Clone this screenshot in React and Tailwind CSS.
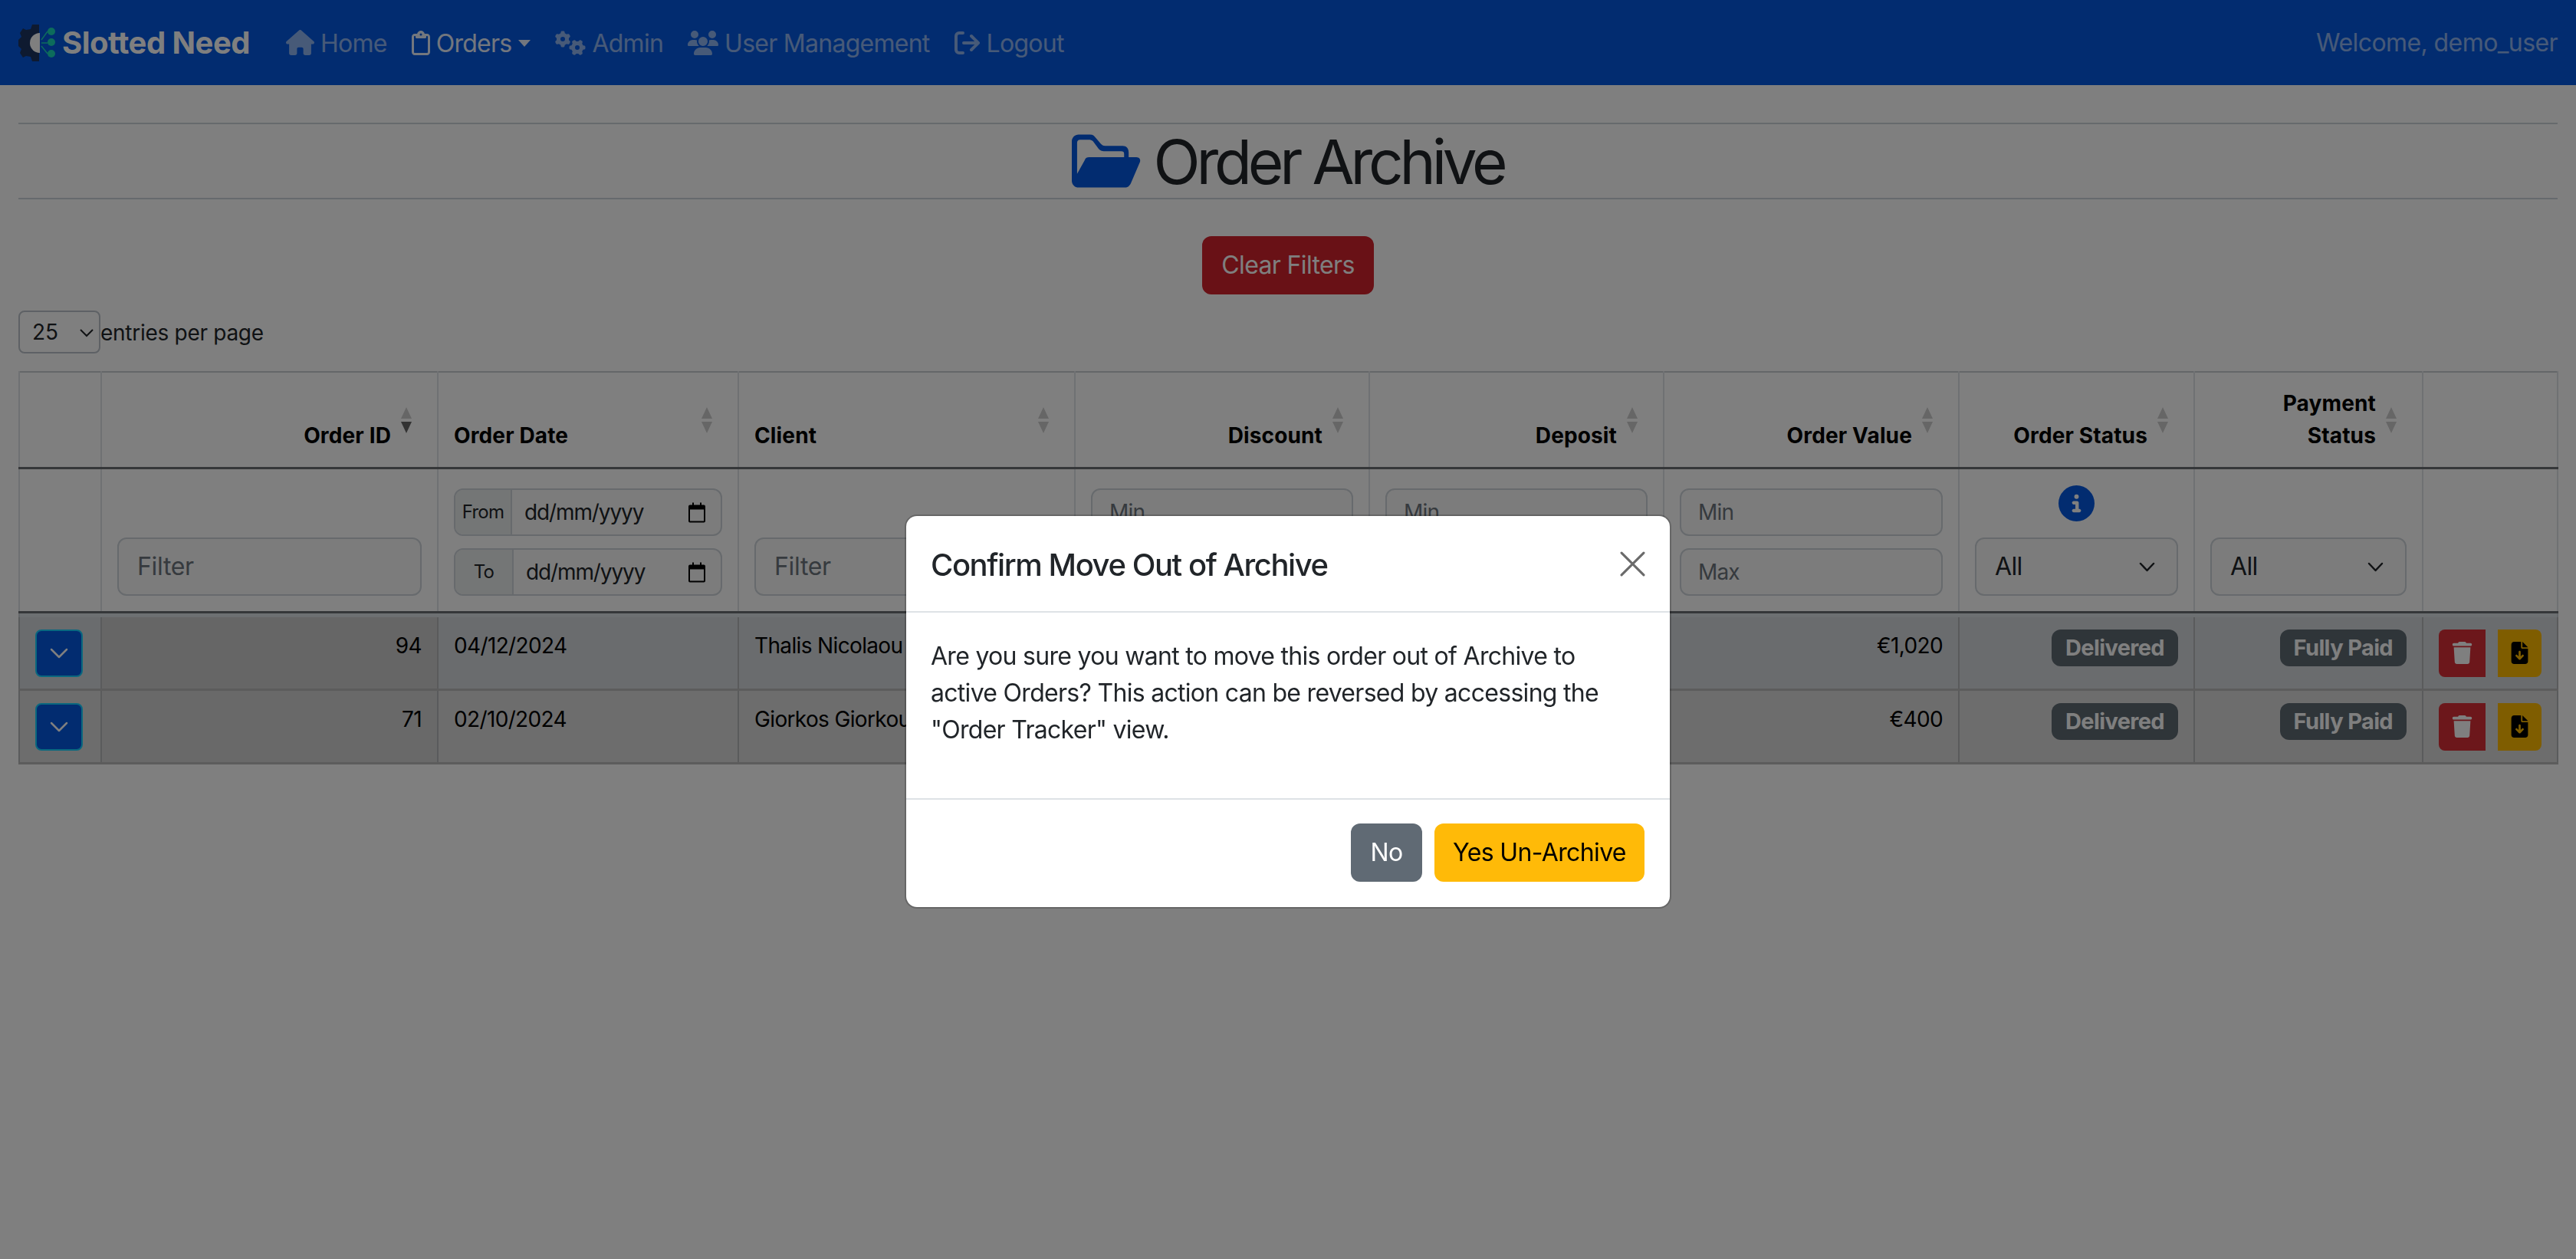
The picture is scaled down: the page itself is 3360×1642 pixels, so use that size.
import React from "react";
import { FaHouse, FaRegClipboard, FaGears, FaUsers, FaCircleInfo, FaTrash, FaFileArrowDown } from "react-icons/fa6";

const NavItem = ({ icon, label, active, gap = "gap-[8px]" }) => (
  <a className={`flex items-center ${gap} text-[32px] leading-[48px] tracking-[-0.023em] ${active ? "text-white/90" : "text-white/55"}`}>
    {icon}
    <span className="pt-[3px]">{label}</span>
    {active && <span className="ml-[1px] mt-[2px] border-x-[8px] border-t-[9px] border-x-transparent border-t-white/90" />}
  </a>
);

const Sort = ({ active }) => (
  <svg className="absolute right-[32px] top-[45px] w-[16px] h-[34px]" viewBox="0 0 16 34">
    <path d="M8 0 L15 15 L1 15 Z" fill="#000" fillOpacity="0.2" />
    <path d="M8 34 L15 19 L1 19 Z" fill="#000" fillOpacity={active ? 0.6 : 0.2} />
  </svg>
);

const Th = ({ children, right, active }) => (
  <th className={`relative align-bottom border-x-2 border-[#dee2e6] pl-[20px] pr-[60px] pt-[19px] pb-[20px] text-[28px] leading-[42px] tracking-[0.005em] font-bold text-black ${right ? "text-right" : "text-left"}`}>
    {children}
    <Sort active={active} />
  </th>
);

const inputCls = "block w-full border-2 border-[#ced4da] rounded-[12px] bg-[#f8f8f8] text-[#6c757d] px-[22px] text-[28px] tracking-[-0.03em]";

const Filter = () => (
  <div className={`${inputCls} h-[76px] leading-[72px] !text-[32px] !tracking-[-0.01em] pl-[24px]`}>Filter</div>
);

const MinMax = () => (
  <div className="flex flex-col gap-[16px]">
    <div className={`${inputCls} h-[62px] leading-[58px]`}>Min</div>
    <div className={`${inputCls} h-[62px] leading-[58px]`}>Max</div>
  </div>
);

const DateIcon = () => (
  <svg width="22" height="27" viewBox="0 0 22 26" className="ml-auto mr-[20px]">
    <path d="M5 0h2v3h8V0h2v3h3a2 2 0 0 1 2 2v19a2 2 0 0 1-2 2H2a2 2 0 0 1-2-2V5a2 2 0 0 1 2-2h3z M2 9v15h18V9z" fill="#000" fillRule="evenodd" />
  </svg>
);

const DateField = ({ label, w, h }) => (
  <div className={`flex ${h} border-2 border-[#ced4da] rounded-[12px] bg-[#f8f8f8] overflow-hidden items-stretch`}>
    <span className={`${w} flex items-center justify-center bg-[#e9ecec] border-r-2 border-[#ced4da] text-[24px] tracking-[-0.03em] text-[#212529]`}>{label}</span>
    <span className="flex-1 flex items-center pl-[16px] text-[28px] tracking-[-0.04em] text-[#212529]">dd/mm/yyyy<DateIcon /></span>
  </div>
);

const Select = () => (
  <div className="relative flex items-center h-[76px] border-2 border-[#ced4da] rounded-[12px] bg-[#f8f8f8] pl-[24px] text-[32px] tracking-[-0.02em] text-[#212529]">
    All
    <svg className="absolute right-[28px] top-[30px] w-[21px] h-[13px]" viewBox="0 0 21 13" fill="none" stroke="#212529" strokeWidth="2.5" strokeLinecap="round" strokeLinejoin="round">
      <path d="M2 2 L10.5 11 L19 2" />
    </svg>
  </div>
);

const Badge = ({ children }) => (
  <span className="inline-block bg-[#5e6a72] text-white rounded-[12px] px-[18px] h-[48px] leading-[48px] text-[29px] font-bold">{children}</span>
);

const Td = ({ children, right, className = "" }) => (
  <td className={`align-top border-x-2 border-[#b4b6b8] px-[20px] pt-[16px] pb-[15px] text-[28px] leading-[42px] tracking-[-0.023em] text-black ${right ? "text-right" : "text-left"} ${className}`}>{children}</td>
);

const Row = ({ id, date, client, value, bg, sortedBg }) => (
  <tr className={`${bg} border-b-[3px] border-[#b8b8b8]`}>
    <Td>
      <button className="flex items-center justify-center w-[62px] h-[62px] rounded-[8px] bg-[#0458e0] border-2 border-[#14d0ff] text-white">
        <svg width="24" height="14" viewBox="0 0 24 14" fill="none" stroke="white" strokeWidth="2.5" strokeLinecap="round" strokeLinejoin="round"><path d="M2 2 L12 12 L22 2" /></svg>
      </button>
    </Td>
    <Td right className={sortedBg}>{id}</Td>
    <Td>{date}</Td>
    <Td>{client}</Td>
    <Td right />
    <Td right />
    <Td right>{value}</Td>
    <Td right><Badge>Delivered</Badge></Td>
    <Td right><Badge>Fully Paid</Badge></Td>
    <Td className="!pl-[20px] !pr-0">
      <div className="flex gap-[16px]">
        <button className="flex items-center justify-center w-[61px] h-[62px] rounded-l-[8px] bg-[#d82e36] text-white"><FaTrash size={29} /></button>
        <button className="flex items-center justify-center w-[57px] h-[62px] rounded-r-[8px] bg-[#ffba00] text-black"><FaFileArrowDown size={29} /></button>
      </div>
    </Td>
  </tr>
);

export default function App() {
  return (
    <div className="relative min-h-[1642px] bg-white overflow-hidden text-[#212529]" style={{ fontFamily: "Inter, 'Liberation Sans', sans-serif" }}>
      <nav className="flex items-center h-[111px] bg-[#0458e0] px-[24px]">
        <svg width="52" height="48" viewBox="0 0 52 48" className="mr-[5px]">
          <path d="M18 0h9v48h-9l-2-6-6-1-4 2-4-6 2-5-4-4v-8l4-4-2-5 4-6 4 2 6-1z" fill="#1c3460" />
          <path d="M28 11a13 13 0 0 0 0 26z" fill="#ffffff" />
          <circle cx="43" cy="9" r="5" fill="#1ad8b8" /><circle cx="43" cy="23" r="5" fill="#1ad8b8" /><circle cx="43" cy="38" r="5" fill="#1ad8b8" />
          <path d="M30 20L38 9M30 24h8M30 28l8 10" stroke="#1ad8b8" strokeWidth="1.5" />
        </svg>
        <span className="text-[40px] leading-[60px] font-bold text-white tracking-[-0.0125em] mr-[47px]">Slotted Need</span>
        <div className="flex items-center gap-[32px]">
          <NavItem icon={<FaHouse size={37} />} label="Home" />
          <NavItem icon={<FaRegClipboard size={32} className="-mx-[4px]" />} label="Orders" active />
          <NavItem icon={<FaGears size={40} />} label="Admin" />
          <NavItem icon={<FaUsers size={40} />} label="User Management" />
          <NavItem
            icon={
              <svg width="34" height="30" viewBox="0 0 34 30" fill="none" stroke="currentColor" strokeWidth="4" strokeLinecap="round" strokeLinejoin="round">
                <path d="M11 2H6a4 4 0 0 0-4 4v18a4 4 0 0 0 4 4h5" />
                <path d="M12 15H31M22 6l9 9-9 9" />
              </svg>
            }
            label="Logout"
          />
        </div>
        <span className="ml-auto text-[32px] tracking-[-0.018em] text-white/55">Welcome, demo_user</span>
      </nav>

      <main className="px-[24px]">
        <div className="mt-[49px] border-y-2 border-[#cdd4da] h-[100px] flex items-center justify-center">
          <svg width="90" height="70" viewBox="0 0 91 70" className="mr-[16px] text-[#0458e0]">
            <path fill="currentColor" d="M9 0H24C28 0 30 2 32 5L38 12C40 14 41 15 44 15H67C72 15 75 18 75 24V31H69V26C69 23 68 22 65 22H42C38 22 36 20 34 17L28 9C26 7.5 25 7 22 7H11C8 7 7 9 7 11V52L17 34C18 31 20 30 23 30H85C89 30 91 33 90 36L78 64C76 68 74 70 70 70H9C4 70 0 66 0 61V9C0 4 4 0 9 0Z" />
          </svg>
          <h1 className="pt-[2px] text-[80px] leading-[96px] font-normal tracking-[-0.065em] text-[#212529]">Order Archive</h1>
        </div>
        <div className="flex justify-center mt-[48px]">
          <button className="w-[224px] h-[76px] rounded-[12px] bg-[#d2222c] text-white text-[32px] tracking-[-0.02em]">Clear Filters</button>
        </div>
        <div className="flex items-center mt-[21px] h-[56px]">
          <div className="relative flex items-center w-[107px] h-[56px] border-2 border-[#bcc3ca] rounded-[8px] pl-[16px] text-[28px]">
            25
            <svg className="absolute right-[6px] top-[21px] w-[20px] h-[12px]" viewBox="0 0 20 12" fill="none" stroke="#212529" strokeWidth="2"><path d="M2 2 L10 10 L18 2" /></svg>
          </div>
          <span className="pt-[2px] text-[28px] tracking-[-0.01em] text-[#212529]">entries per page</span>
        </div>

        <table className="table-fixed w-[3311px] mt-[23px] border-collapse border-2 border-[#c8ced2]">
          <colgroup>
            <col className="w-[107px]" /><col className="w-[439px]" /><col className="w-[392px]" /><col className="w-[439px]" />
            <col className="w-[384px]" /><col className="w-[384px]" /><col className="w-[385px]" /><col className="w-[307px]" />
            <col className="w-[298px]" /><col className="w-[176px]" />
          </colgroup>
          <thead>
            <tr className="h-[120px] border-b-[3px] border-[#6b6f73]">
              <th className="border-x-2 border-[#dee2e6]" />
              <Th right active>Order ID</Th>
              <Th>Order Date</Th>
              <Th>Client</Th>
              <Th right>Discount</Th>
              <Th right>Deposit</Th>
              <Th right>Order Value</Th>
              <Th right>Order Status</Th>
              <Th right>Payment<br />Status</Th>
              <th className="border-x-2 border-[#dee2e6]" />
            </tr>
          </thead>
          <tbody>
            <tr className="border-b-[3px] border-[#6b6f73] [&>td]:border-x-2 [&>td]:border-[#dee2e6] [&>td]:align-bottom [&>td]:px-[20px] [&>td]:pb-[20px] [&>td]:pt-[21px]">
              <td />
              <td><Filter /></td>
              <td>
                <div className="flex flex-col gap-[16px]">
                  <DateField label="From" w="w-[74px]" h="h-[62px]" />
                  <DateField label="To" w="w-[76px]" h="h-[62px]" />
                </div>
              </td>
              <td><Filter /></td>
              <td><MinMax /></td>
              <td><MinMax /></td>
              <td><MinMax /></td>
              <td>
                <div className="flex justify-center mb-[21px]"><FaCircleInfo size={47} className="text-[#0458e0]" /></div>
                <Select />
              </td>
              <td><Select /></td>
              <td />
            </tr>
            <tr className="h-[6px] bg-[#dbe0e4]"><td colSpan={10} className="p-0" /></tr>
            <Row id="94" date="04/12/2024" client="Thalis Nicolaou" value="€1,020" bg="bg-[#d4d8dc]" sortedBg="bg-[#cccccc]" />
            <Row id="71" date="02/10/2024" client="Giorkos Giorkou" value="€400" bg="bg-[#dadada]" sortedBg="bg-[#d2d2d2]" />
          </tbody>
        </table>
      </main>

      <div className="fixed inset-0 bg-black/50" />

      <div className="fixed left-[1180px] top-[671px] w-[1000px] h-[514px] bg-white bg-clip-padding rounded-[16px] border-2 border-black/20 flex flex-col">
        <div className="flex items-center justify-between h-[126px] pl-[32px] pr-[32px] border-b-2 border-[#dee2e6] shrink-0">
          <h5 className="pt-[3px] text-[40px] font-medium tracking-[-0.036em] text-[#212529]">Confirm Move Out of Archive</h5>
          <svg width="33" height="33" viewBox="0 0 32 32" stroke="#6a6a6a" strokeWidth="3" strokeLinecap="round"><path d="M2 2L30 30M30 2L2 30" /></svg>
        </div>
        <div className="flex-1 pl-[32px] pr-[70px] pt-[33px] text-[32px] leading-[48px] tracking-[-0.022em] text-[#212529]">
          Are you sure you want to move this order out of Archive to active Orders? This action can be reversed by accessing the "Order Tracker" view.
        </div>
        <div className="flex items-center justify-end gap-[16px] h-[142px] pl-[32px] pr-[33px] pb-[2px] border-t-2 border-[#dee2e6] shrink-0">
          <button className="w-[93px] h-[76px] rounded-[12px] bg-[#606a74] text-white text-[32px] tracking-[-0.02em]">No</button>
          <button className="w-[274px] h-[76px] rounded-[12px] bg-[#ffba08] text-black text-[32px] tracking-[-0.02em]">Yes Un-Archive</button>
        </div>
      </div>
    </div>
  );
}
